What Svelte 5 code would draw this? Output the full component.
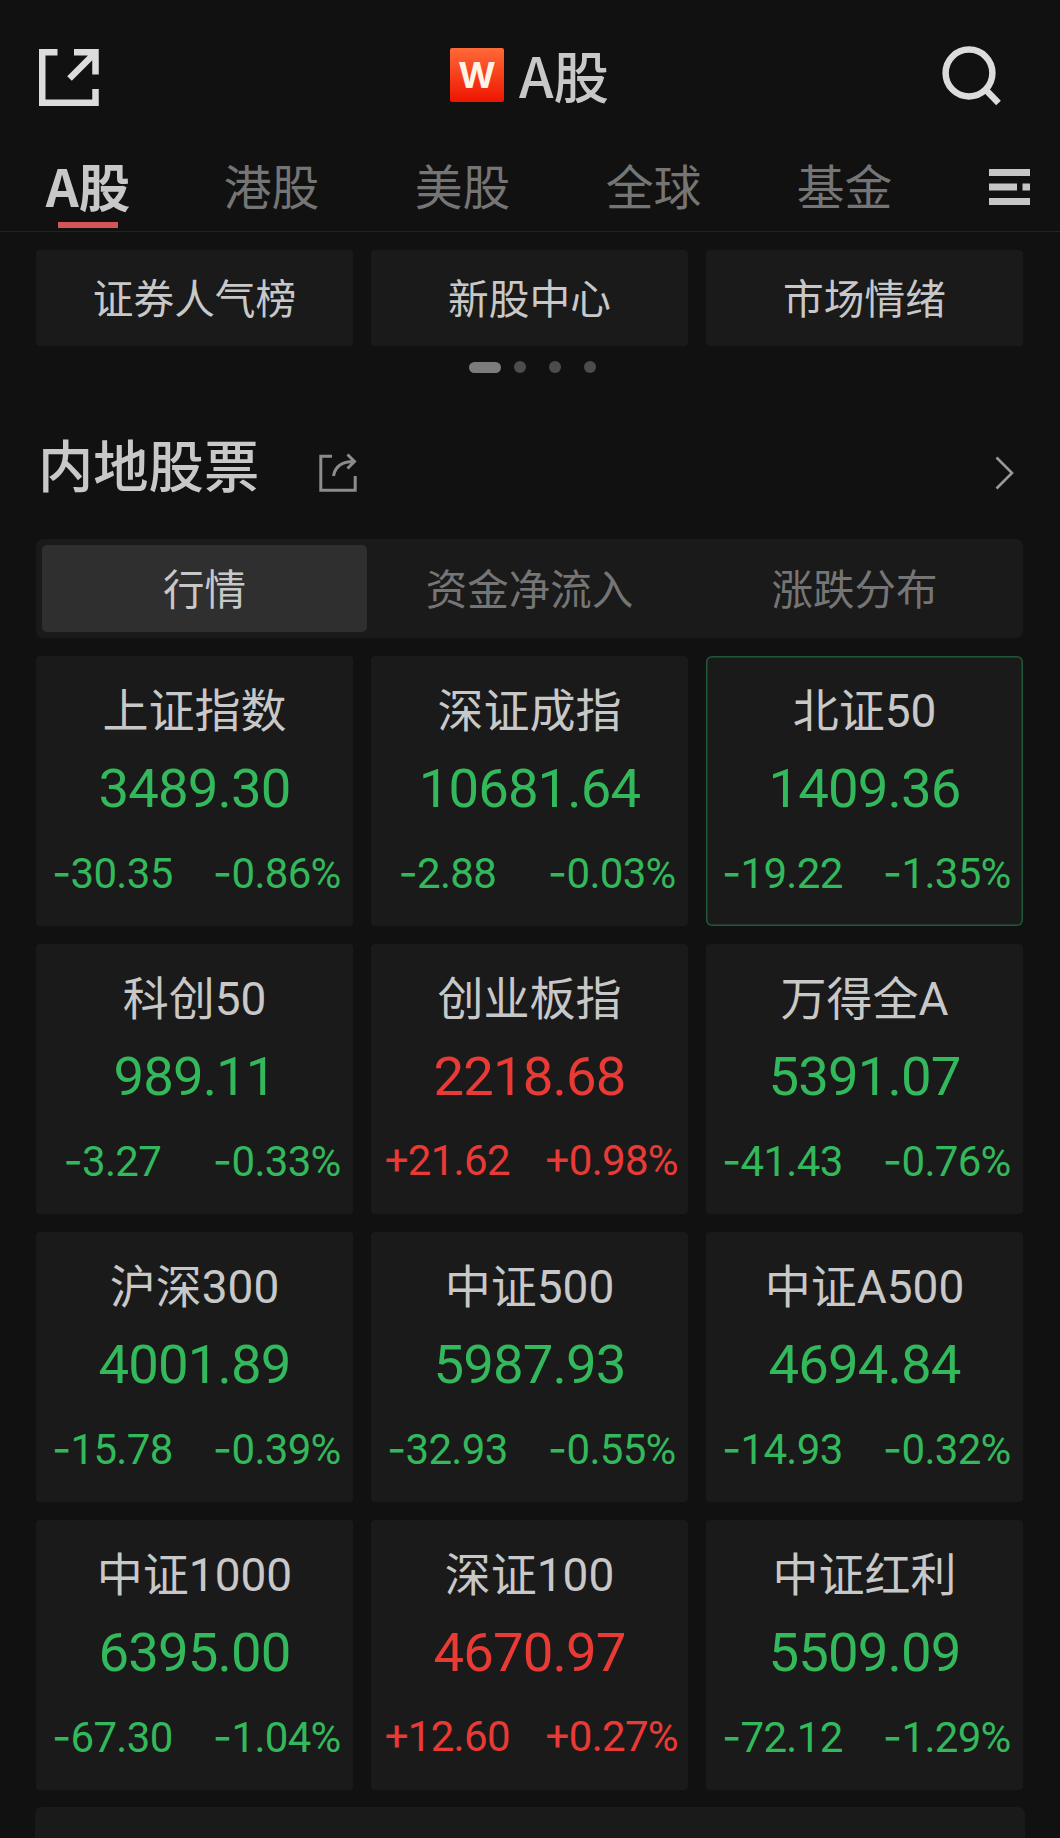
<script lang="ts">
	type Quote = { name: string; price: string; change: string; percent: string; active?: boolean };

	const markets = ['A股', '港股', '美股', '全球', '基金'];
	const shortcuts = ['证券人气榜', '新股中心', '市场情绪'];
	const views = ['行情', '资金净流入', '涨跌分布'];

	const quotes: Quote[] = [
		{ name: '上证指数', price: '3489.30', change: '-30.35', percent: '-0.86%' },
		{ name: '深证成指', price: '10681.64', change: '-2.88', percent: '-0.03%' },
		{ name: '北证50', price: '1409.36', change: '-19.22', percent: '-1.35%', active: true },
		{ name: '科创50', price: '989.11', change: '-3.27', percent: '-0.33%' },
		{ name: '创业板指', price: '2218.68', change: '+21.62', percent: '+0.98%' },
		{ name: '万得全A', price: '5391.07', change: '-41.43', percent: '-0.76%' },
		{ name: '沪深300', price: '4001.89', change: '-15.78', percent: '-0.39%' },
		{ name: '中证500', price: '5987.93', change: '-32.93', percent: '-0.55%' },
		{ name: '中证A500', price: '4694.84', change: '-14.93', percent: '-0.32%' },
		{ name: '中证1000', price: '6395.00', change: '-67.30', percent: '-1.04%' },
		{ name: '深证100', price: '4670.97', change: '+12.60', percent: '+0.27%' },
		{ name: '中证红利', price: '5509.09', change: '-72.12', percent: '-1.29%' }
	];

	let market = $state(0);
	let view = $state(0);
</script>

{#snippet signed(value: string)}
	<span><span class="sign">{value[0]}</span>{value.slice(1)}</span>
{/snippet}

<div class="page">
	<header>
		<svg class="open" width="60" height="58" viewBox="0 0 60 58" fill="none" stroke="#dcdcdc" stroke-width="6.5">
			<path d="M18.5 3.25H3.25V53.75H56.5V40" />
			<path d="M35 3.25H56.5V25.5M55 5L30.5 29.5" />
		</svg>
		<div class="title">
			<span class="logo">W</span>
			<h1>A股</h1>
		</div>
		<svg class="search" width="60" height="60" viewBox="0 0 60 60" fill="none" stroke="#dcdcdc" stroke-width="6.5">
			<circle cx="27" cy="27" r="23.4" />
			<path d="M43 43L56.5 57" />
		</svg>
	</header>

	<nav>
		{#each markets as name, i}
			<button class="market" class:selected={market === i} onclick={() => (market = i)}>{name}</button>
		{/each}
		<svg class="menu" width="41" height="36" viewBox="0 0 41 36" fill="#c6c6c6">
			<path d="M0 0H41V7H0zM0 14.5H28V21.5H0zM33.5 14.5H41V21.5H33.5zM0 29H41V36H0z" />
		</svg>
	</nav>

	<main>
		<div class="shortcuts">
			{#each shortcuts as name}
				<div class="shortcut">{name}</div>
			{/each}
		</div>
		<div class="pager">
			<i class="current"></i><i></i><i></i><i></i>
		</div>

		<div class="heading">
			<h2>内地股票</h2>
			<svg class="share" width="38" height="40" viewBox="0 0 38 40" fill="none" stroke="#8c8c8c" stroke-width="3">
				<path d="M13 3.3H1.8V37.2H36.2V23" />
				<path d="M14.5 23C16 14 22 8.5 35 8.5M28.5 1.5L35.5 8.5L28.5 15.5" />
			</svg>
			<svg class="more" width="20" height="34" viewBox="0 0 20 34" fill="none" stroke="#9a9a9a" stroke-width="2.6">
				<path d="M1.5 1.5L17 17L1.5 32.5" />
			</svg>
		</div>

		<div class="views">
			{#each views as name, i}
				<button class:selected={view === i} onclick={() => (view = i)}>{name}</button>
			{/each}
		</div>

		<div class="quotes">
			{#each quotes as q}
				<div class="quote" class:up={q.change[0] === '+'} class:active={q.active}>
					<div class="name">{q.name}</div>
					<div class="price">{q.price}</div>
					<div class="diff">
						{@render signed(q.change)}
						{@render signed(q.percent)}
					</div>
				</div>
			{/each}
		</div>
	</main>

	<div class="panel"></div>
</div>

<style>
	:global(body) {
		background: #111;
	}

	.page {
		display: flex;
		flex-direction: column;
		width: 1060px;
		height: 1838px;
		overflow: hidden;
		color: #c8c8c8;
		font-family: 'Noto Sans CJK SC', sans-serif;
	}

	h1,
	h2 {
		margin: 0;
		font-weight: 500;
	}

	button {
		padding: 0;
		border: 0;
		background: none;
		color: #757575;
		font: inherit;
		cursor: pointer;
	}

	header {
		display: flex;
		flex: none;
		align-items: center;
		justify-content: space-between;
		height: 150px;
		padding: 0 58px 0 39px;
	}

	.open {
		margin-top: 6px;
	}

	.search {
		margin-top: 2px;
	}

	.title {
		display: flex;
		align-items: center;
		gap: 15px;
		margin-left: 18px;
	}

	.logo {
		width: 54px;
		height: 54px;
		border-radius: 2px;
		background: linear-gradient(#ff6a38, #ee1500);
		color: #fff3e6;
		font: 700 36px/54px Inter, sans-serif;
		text-align: center;
	}

	h1 {
		padding-bottom: 2px;
		font-size: 55.5px;
		line-height: 72px;
	}

	nav {
		display: flex;
		flex: none;
		height: 81px;
		border-bottom: 1px solid #232323;
	}

	.market {
		display: flex;
		flex-direction: column;
		align-items: center;
		width: 191px;
		font-size: 47.8px;
		line-height: 70px;
	}

	.market:first-child {
		width: 176px;
	}

	.market.selected {
		color: #c8c8c8;
		font-size: 51.5px;
		font-weight: 700;
	}

	.market.selected::after {
		width: 60px;
		height: 6px;
		margin-top: 2px;
		background: #d35656;
		content: '';
	}

	.menu {
		margin: 19px 0 0 49px;
	}

	main {
		padding: 18px 37px 0 36px;
	}

	.shortcuts,
	.quotes {
		display: grid;
		grid-template-columns: repeat(3, 1fr);
		gap: 18px;
	}

	.shortcut {
		height: 96px;
		border-radius: 4px;
		background: #1a1a1a;
		font-size: 40.7px;
		line-height: 93px;
		text-align: center;
	}

	.pager {
		display: flex;
		align-items: center;
		justify-content: center;
		gap: 23px;
		height: 12px;
		margin: 15px 0 0 5px;
	}

	.pager i {
		width: 12px;
		height: 12px;
		border-radius: 6px;
		background: #4c4c4c;
	}

	.pager .current {
		width: 32px;
		height: 11px;
		margin-right: -10px;
		background: #7c7c7c;
	}

	.heading {
		display: flex;
		align-items: center;
		height: 100px;
		margin-top: 40px;
	}

	h2 {
		margin-left: 2px;
		font-size: 55.3px;
		line-height: 100px;
	}

	.share {
		margin: 20px 0 0 60px;
	}

	.more {
		margin: 20px 8px 0 auto;
	}

	.views {
		display: grid;
		grid-template-columns: repeat(3, 1fr);
		height: 87px;
		margin: 26px 0 18px;
		padding: 6px;
		border-radius: 7px;
		background: #1a1a1a;
	}

	.views button {
		padding-bottom: 3px;
		border-radius: 5px;
		font-size: 41.5px;
		line-height: 84px;
	}

	.views .selected {
		background: #2f2f2f;
		color: #c8c8c8;
	}

	.quote {
		box-sizing: border-box;
		height: 270px;
		padding-top: 25px;
		border-radius: 4px;
		background: #1a1a1a;
		color: #33b85c;
		font-family: Roboto, 'Noto Sans CJK SC', sans-serif;
		text-align: center;
	}

	.quote.up {
		color: #ea3a36;
	}

	.quote.active {
		border-radius: 6px;
		box-shadow: inset 0 0 0 1.5px #20583a;
	}

	.name {
		color: #c8c8c8;
		font-size: 46px;
		line-height: 60px;
	}

	.price {
		margin-top: 1px;
		font-size: 54.5px;
		line-height: 93px;
		letter-spacing: -0.9px;
	}

	.diff {
		display: grid;
		grid-template-columns: 1fr 1fr;
		column-gap: 12px;
		font-size: 42px;
		line-height: 75px;
		letter-spacing: -0.7px;
	}

	.quote:not(.up) .sign {
		font-family: Inter, sans-serif;
	}

	.panel {
		flex: none;
		height: 60px;
		margin: 17px 35px 0;
		border-radius: 7px;
		background: #1a1a1a;
	}
</style>
